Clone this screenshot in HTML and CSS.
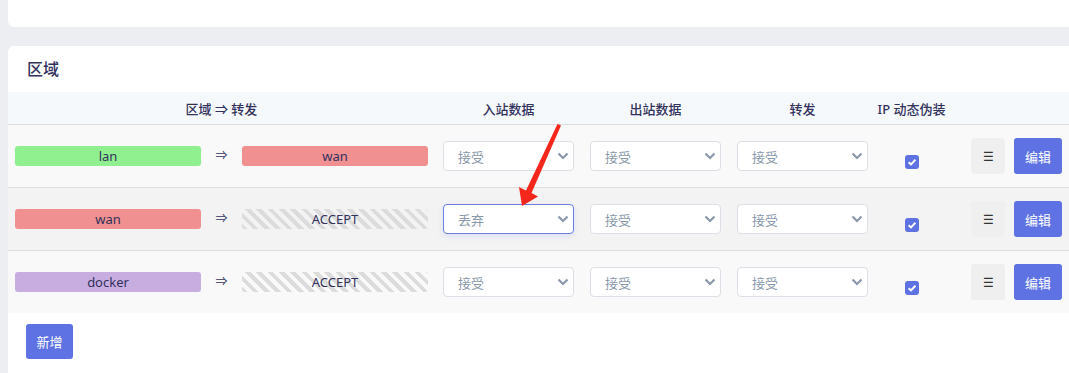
FILE: index.html
```html
<!DOCTYPE html>
<html lang="zh-CN">
<head>
<meta charset="UTF-8">
<title>防火墙 - 区域</title>
<link rel="stylesheet" href="styles.css">
</head>
<body>
  <div class="page">
    <div class="card card-top"></div>

    <div class="card zones">
      <h3 class="card-title">区域</h3>

      <div class="zone-table">
        <div class="zone-row zone-head">
          <div class="cell">区域 ⇒ 转发</div>
          <div class="cell">入站数据</div>
          <div class="cell">出站数据</div>
          <div class="cell">转发</div>
          <div class="cell">IP 动态伪装</div>
          <div class="cell"></div>
        </div>

        <div class="zone-row">
          <div class="cell zone-pair">
            <span class="zone-badge lan">lan</span>
            <span class="zone-arrow">⇒</span>
            <span class="zone-badge wan">wan</span>
          </div>
          <div class="cell"><div class="select"><span>接受</span><svg viewBox="0 0 12 8"><path d="M1.5 1.5 6 6l4.5-4.5"/></svg></div></div>
          <div class="cell"><div class="select"><span>接受</span><svg viewBox="0 0 12 8"><path d="M1.5 1.5 6 6l4.5-4.5"/></svg></div></div>
          <div class="cell"><div class="select"><span>接受</span><svg viewBox="0 0 12 8"><path d="M1.5 1.5 6 6l4.5-4.5"/></svg></div></div>
          <div class="cell"><span class="check"><svg viewBox="0 0 14 14"><path d="M3.6 7.2 6 9.4l4.4-4.6"/></svg></span></div>
          <div class="cell row-actions">
            <button class="btn btn-drag">☰</button>
            <button class="btn btn-primary">编辑</button>
          </div>
        </div>

        <div class="zone-row hover">
          <div class="cell zone-pair">
            <span class="zone-badge wan">wan</span>
            <span class="zone-arrow">⇒</span>
            <span class="zone-badge any">ACCEPT</span>
          </div>
          <div class="cell"><div class="select focus"><span>丢弃</span><svg viewBox="0 0 12 8"><path d="M1.5 1.5 6 6l4.5-4.5"/></svg></div></div>
          <div class="cell"><div class="select"><span>接受</span><svg viewBox="0 0 12 8"><path d="M1.5 1.5 6 6l4.5-4.5"/></svg></div></div>
          <div class="cell"><div class="select"><span>接受</span><svg viewBox="0 0 12 8"><path d="M1.5 1.5 6 6l4.5-4.5"/></svg></div></div>
          <div class="cell"><span class="check"><svg viewBox="0 0 14 14"><path d="M3.6 7.2 6 9.4l4.4-4.6"/></svg></span></div>
          <div class="cell row-actions">
            <button class="btn btn-drag">☰</button>
            <button class="btn btn-primary">编辑</button>
          </div>
        </div>

        <div class="zone-row">
          <div class="cell zone-pair">
            <span class="zone-badge docker">docker</span>
            <span class="zone-arrow">⇒</span>
            <span class="zone-badge any">ACCEPT</span>
          </div>
          <div class="cell"><div class="select"><span>接受</span><svg viewBox="0 0 12 8"><path d="M1.5 1.5 6 6l4.5-4.5"/></svg></div></div>
          <div class="cell"><div class="select"><span>接受</span><svg viewBox="0 0 12 8"><path d="M1.5 1.5 6 6l4.5-4.5"/></svg></div></div>
          <div class="cell"><div class="select"><span>接受</span><svg viewBox="0 0 12 8"><path d="M1.5 1.5 6 6l4.5-4.5"/></svg></div></div>
          <div class="cell"><span class="check"><svg viewBox="0 0 14 14"><path d="M3.6 7.2 6 9.4l4.4-4.6"/></svg></span></div>
          <div class="cell row-actions">
            <button class="btn btn-drag">☰</button>
            <button class="btn btn-primary">编辑</button>
          </div>
        </div>
      </div>

      <div class="zone-add">
        <button class="btn btn-primary btn-add">新增</button>
      </div>
    </div>
  </div>

  <!-- annotation arrow drawn over the screenshot -->
  <svg class="annot" width="1069" height="373" viewBox="0 0 1069 373">
    <polygon points="557.5,124 561,125.5 531.5,193 538,196.5 522,206 519,187 526,190.5" fill="#f5261c"/>
  </svg>
</body>
</html>
```

FILE: styles.css
```css
html, body {
  margin: 0;
  overflow: hidden;
}
body {
  background-color: #edeef2;
  font-family: "Noto Sans", "Noto Sans CJK SC", sans-serif;
  font-size: 13px;
  color: #32325d;
  position: relative;
}
.page {
  padding-left: 8px;
  height: 373px;
}
.card {
  background-color: #fff;
  border-radius: 6px;
  width: calc(100% + 20px);
}
.card-top {
  height: 27px;
  border-radius: 0 0 6px 6px;
  margin-bottom: 19px;
}
.zones {
  padding-bottom: 20px;
}
.card-title {
  margin: 0;
  height: 46px;
  line-height: 46px;
  padding: 0 19px;
  font-size: 16px;
  font-weight: 500;
}

/* table */
.zone-row {
  display: grid;
  grid-template-columns: 427px 147px 147px 147px 71px 1fr;
  height: 62px;
  border-top: 1px solid #dedede;
  background-color: #f9f9f9;
}
.zone-row.hover {
  background-color: #f3f3f3;
}
.zone-head {
  height: 32px;
  border-top: none;
  border-bottom: 1px solid #dedede;
  background-color: #f6f9fc;
  font-weight: 500;
  white-space: nowrap;
}
.zone-head + .zone-row {
  border-top: none;
}
.cell {
  display: flex;
  align-items: center;
  justify-content: center;
  padding: 0 8px;
}
.zone-pair {
  padding: 0 7px;
  justify-content: space-between;
}
.zone-badge {
  width: 186px;
  height: 20px;
  line-height: 20px;
  border-radius: 3px;
  text-align: center;
}
.zone-badge.lan { background-color: #90f090; }
.zone-badge.wan { background-color: #f09090; }
.zone-badge.docker { background-color: #c8ade0; }
.zone-badge.any {
  background-image: repeating-linear-gradient(45deg, #dcdcdc 0 4px, transparent 4px 8px);
}
.zone-arrow {
  font-size: 12px;
  margin-top: -3px;
}

/* select */
.select {
  width: 133px;
  height: 30px;
  box-sizing: border-box;
  border: 1px solid #dcdfe6;
  border-radius: 4px;
  background-color: #fff;
  display: flex;
  align-items: center;
  justify-content: space-between;
  padding: 0 4px 0 14px;
  color: #8898aa;
}
.select svg {
  width: 12px;
  height: 8px;
  fill: none;
  stroke: #8a98ab;
  stroke-width: 2.2;
}
.select.focus {
  border-color: #6a7ee6;
  box-shadow: 0 2px 6px rgba(94, 114, 228, 0.15);
}

/* checkbox */
.check {
  width: 14px;
  height: 14px;
  margin-top: 12px;
  border-radius: 3px;
  background-color: #5e72e4;
  display: flex;
}
.check svg {
  width: 14px;
  height: 14px;
  fill: none;
  stroke: #fff;
  stroke-width: 2;
}

/* buttons */
.row-actions {
  justify-content: flex-start;
  padding-left: 24px;
  gap: 9px;
}
.btn {
  border: none;
  border-radius: 3px;
  font-family: inherit;
  font-size: 13px;
  cursor: pointer;
  height: 36px;
  padding: 0;
}
.btn-drag {
  width: 34px;
  background-color: #efefef;
  color: #333;
  font-size: 12px;
}
.btn-primary {
  width: 48px;
  background-color: #5e72e4;
  color: #fff;
}
.zone-add {
  padding: 11px 18px 0;
}
.btn-add {
  width: 47px;
  height: 35px;
}

.annot {
  position: absolute;
  top: 0;
  left: 0;
  pointer-events: none;
}
```
